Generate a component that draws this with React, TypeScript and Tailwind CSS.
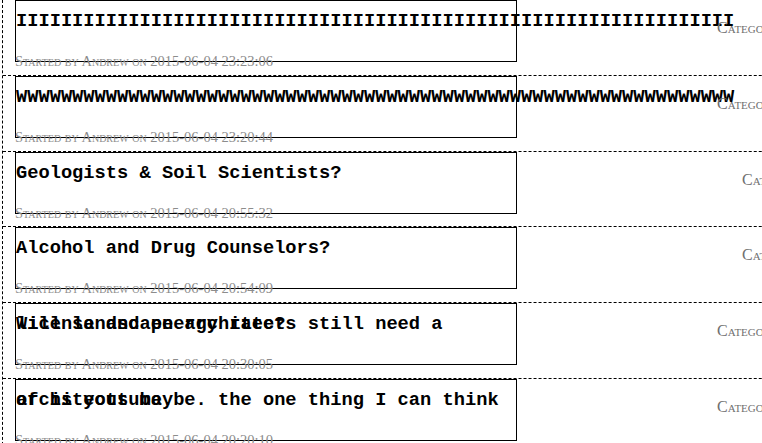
import React from "react";

type Topic = {
  title: string;
  started: string;
  category: string;
  catPad: string;
};

const topics: Topic[] = [
  {
    title: "I".repeat(64),
    started: "2015-06-04 23:23:06",
    category: "Category: General",
    catPad: "pl-[200px]",
  },
  {
    title: "W".repeat(64),
    started: "2015-06-04 23:20:44",
    category: "Category: General",
    catPad: "pl-[200px]",
  },
  {
    title: "Geologists & Soil Scientists?",
    started: "2015-06-04 20:55:32",
    category: "Category: Jobs",
    catPad: "pl-[225px]",
  },
  {
    title: "Alcohol and Drug Counselors?",
    started: "2015-06-04 20:54:09",
    category: "Category: Jobs",
    catPad: "pl-[225px]",
  },
  {
    title: "Will landscape architects still need a license and energy rate?",
    started: "2015-06-04 20:30:05",
    category: "Category: General",
    catPad: "pl-[200px]",
  },
  {
    title: "architects maybe. the one thing I can think of is youtube.",
    started: "2015-06-04 20:20:10",
    category: "Category: General",
    catPad: "pl-[200px]",
  },
];

function TopicRow({ topic }: { topic: Topic }) {
  return (
    <div className="flex h-[75.84px] border-b border-dashed border-black">
      {/* title box + meta */}
      <div className="w-[514px] shrink-0 pl-3">
        <div className="h-[62px] border border-black">
          <h3 className="whitespace-normal pt-[20px] font-['Liberation_Mono',monospace] text-[18.72px] font-bold leading-[0] text-black">
            {topic.title}
          </h3>
        </div>
        <p className="-mt-[8px] whitespace-nowrap font-['Liberation_Serif',serif] text-[14.5px] leading-[14px] text-[#8c8c8c] [font-variant:small-caps]">
          Started by Andrew on {topic.started}
        </p>
      </div>

      {/* category */}
      <div
        className={`${topic.catPad} whitespace-nowrap pt-[20px] font-['Liberation_Serif',serif] text-[16px] leading-[16px] text-[#6f6f6f] [font-variant:small-caps]`}
      >
        {topic.category}
      </div>
    </div>
  );
}

export default function App() {
  return (
    <div className="h-[443px] w-[762px] overflow-hidden bg-white">
      <div className="ml-[2px] w-[1000px] border-l border-dashed border-black">
        {topics.map((t, i) => (
          <TopicRow key={i} topic={t} />
        ))}
      </div>
    </div>
  );
}
